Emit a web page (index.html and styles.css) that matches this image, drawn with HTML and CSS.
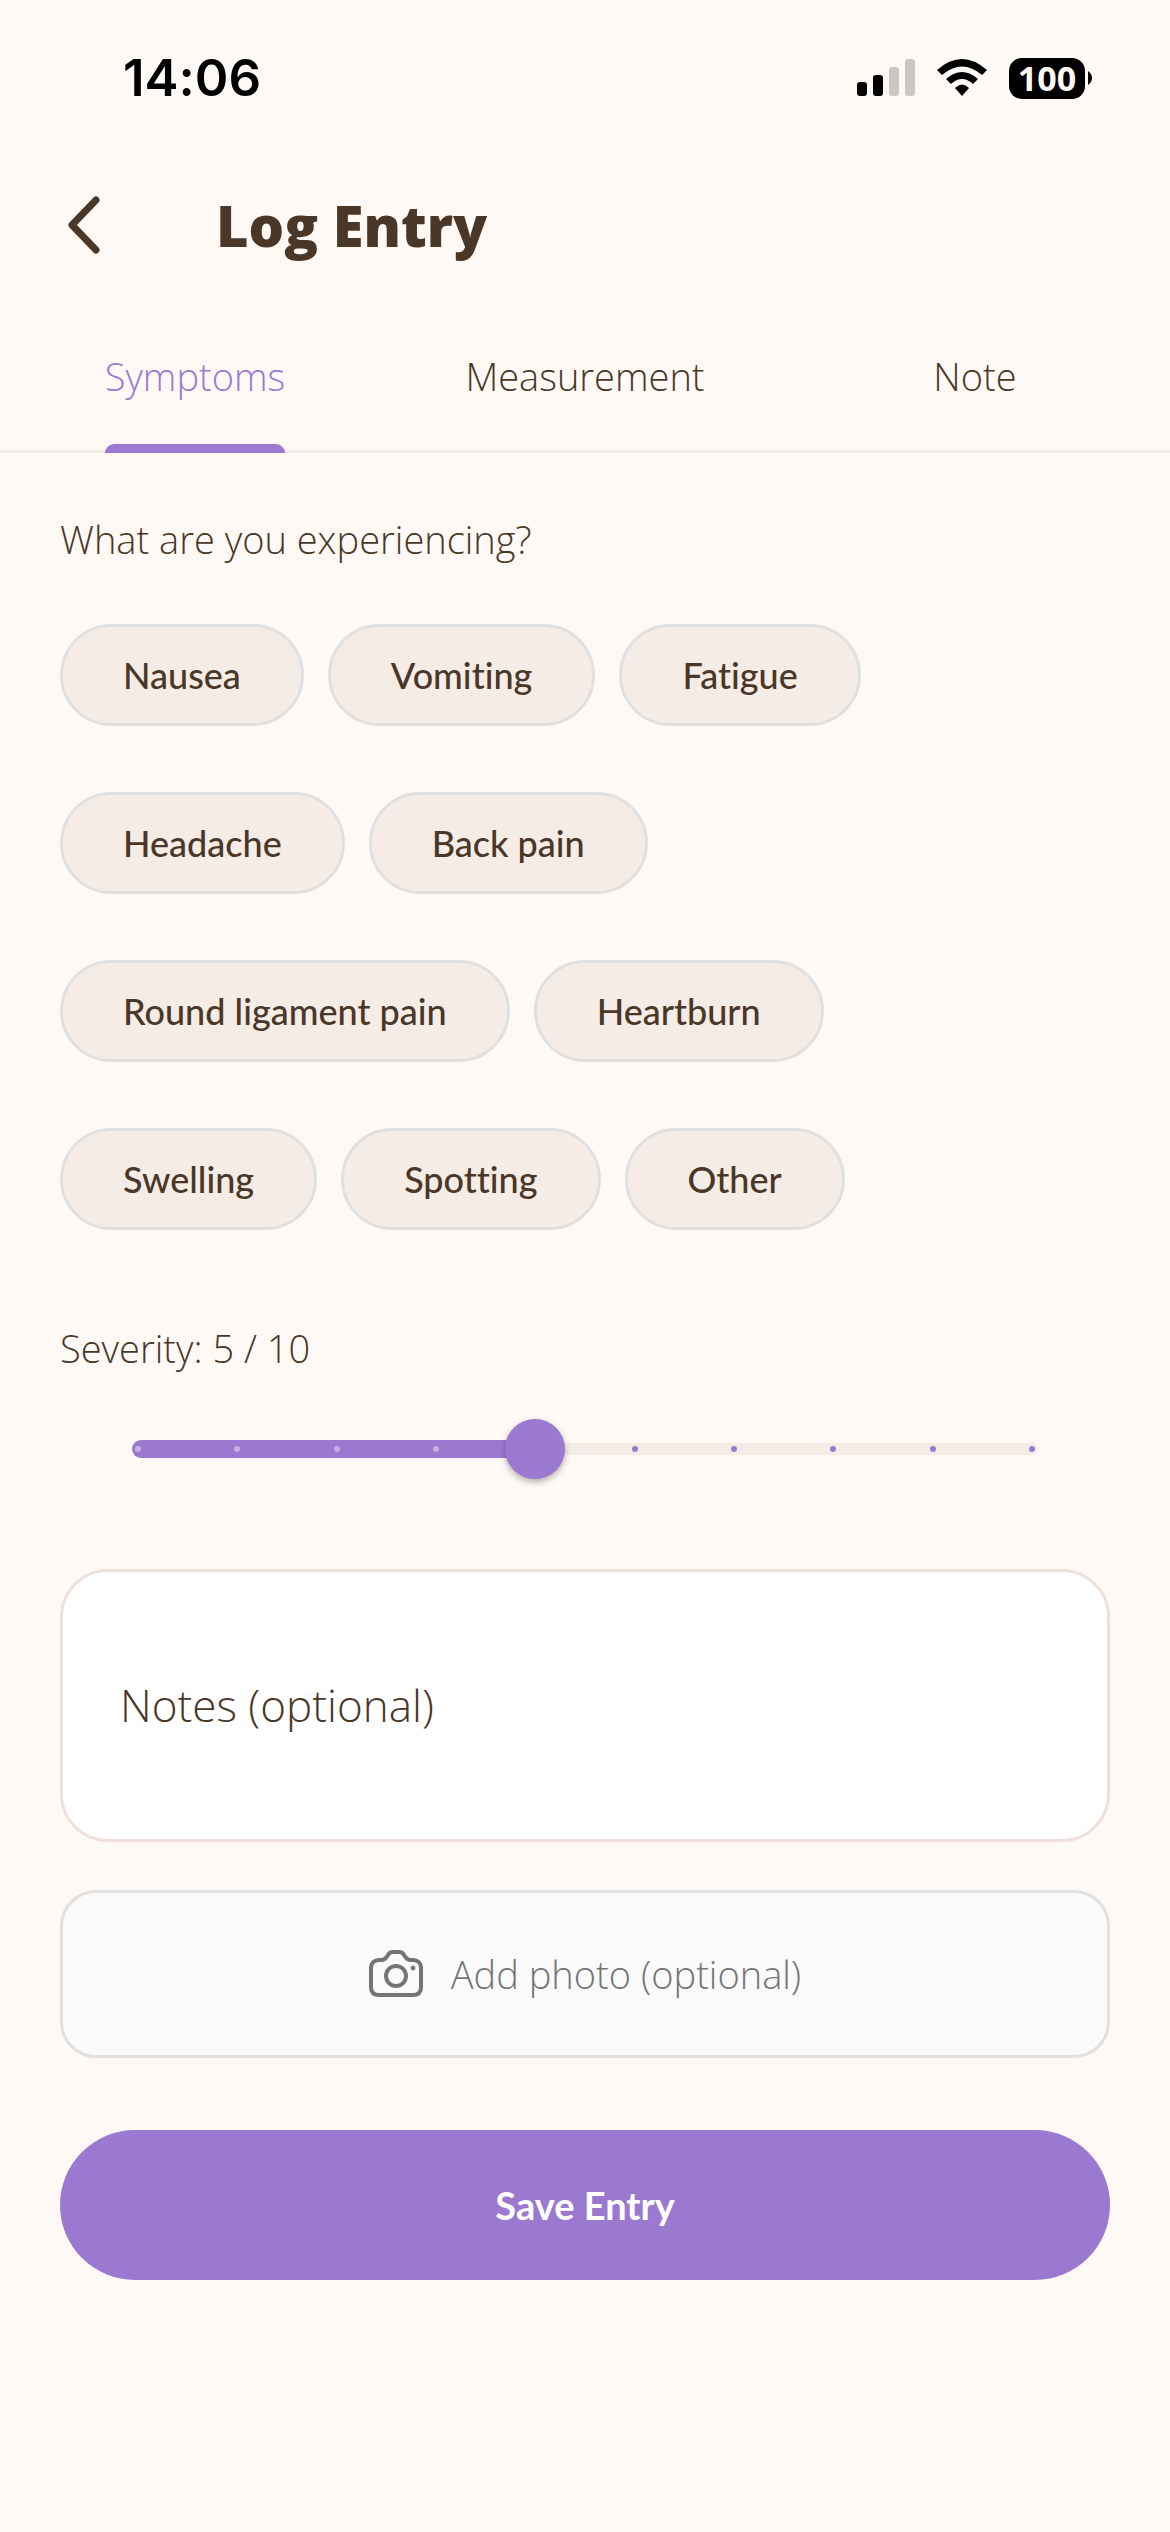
FILE: index.html
```
<!DOCTYPE html>
<html lang="en">
<head>
    <meta charset="UTF-8">
    <meta name="viewport" content="width=device-width, initial-scale=1.0">
    <title>Log Entry</title>
    <link rel="stylesheet" href="styles.css">
</head>
<body>

<div class="status-bar">
    <span class="time">14:06</span>
    <div class="status-icons">
        <svg width="58" height="38" viewBox="0 0 58 38" aria-hidden="true">
            <rect x="0" y="23" width="10" height="14" rx="3"/>
            <rect x="16" y="16" width="10" height="21" rx="3"/>
            <rect x="32" y="8" width="10" height="29" rx="3" fill="#ccc7c4"/>
            <rect x="48" y="0" width="10" height="37" rx="3" fill="#ccc7c4"/>
        </svg>
        <svg width="50" height="38" viewBox="0 0 50 38" aria-hidden="true">
            <path d="M0 11 Q25 -11 50 11 L45 16 Q25 -1 5 16 Z"/>
            <path d="M9 20 Q25 6 41 20 L36 25 Q25 15 14 25 Z"/>
            <path d="M18 29 Q25 22 32 29 L25 37 Z"/>
        </svg>
        <div class="battery">
            <span class="battery-level">100</span>
            <svg width="4" height="14" viewBox="0 0 4 14" aria-hidden="true"><path d="M0 0 Q4 3 4 7 Q4 11 0 14 Z"/></svg>
        </div>
    </div>
</div>

<header class="header">
    <button class="back" type="button" aria-label="Back">
        <svg width="32" height="58" viewBox="0 0 32 58" aria-hidden="true">
            <path d="M28 4 L4 29 L28 54" fill="none" stroke="#4a3728" stroke-width="7" stroke-linecap="round" stroke-linejoin="round"/>
        </svg>
    </button>
    <h1>Log Entry</h1>
</header>

<nav class="tabs">
    <a href="#symptoms" class="tab active" aria-current="page">Symptoms</a>
    <a href="#measurement" class="tab">Measurement</a>
    <a href="#note" class="tab">Note</a>
</nav>

<form class="container" id="symptoms">
    <h2 class="label">What are you experiencing?</h2>
    <div class="chips">
        <button class="chip" type="button">Nausea</button>
        <button class="chip" type="button">Vomiting</button>
        <button class="chip" type="button">Fatigue</button>
        <button class="chip" type="button">Headache</button>
        <button class="chip" type="button">Back pain</button>
        <button class="chip" type="button">Round ligament pain</button>
        <button class="chip" type="button">Heartburn</button>
        <button class="chip" type="button">Swelling</button>
        <button class="chip" type="button">Spotting</button>
        <button class="chip" type="button">Other</button>
    </div>

    <label class="label" for="severity">Severity: 5 / 10</label>
    <div class="slider">
        <div class="track"></div>
        <div class="fill-area"><div class="fill" style="width: 45%"></div></div>
        <div class="ticks">
            <i class="on"></i><i class="on"></i><i class="on"></i><i class="on"></i><i class="on"></i>
            <i></i><i></i><i></i><i></i><i></i>
        </div>
        <input type="range" id="severity" min="1" max="10" value="5">
    </div>

    <textarea class="notes" rows="1" placeholder="Notes (optional)" aria-label="Notes (optional)"></textarea>

    <button class="photo" type="button">
        <svg width="54" height="48" viewBox="0 0 54 48" fill="none" stroke="#757575" stroke-width="4" stroke-linejoin="round" aria-hidden="true">
            <path d="M10 10 H13 C16 10 17 8 19 5 C20 3 22 2 24 2 H30 C32 2 34 3 35 5 C37 8 38 10 41 10 H44 C49 10 52 13 52 18 V37 C52 43 49 45 44 45 H10 C5 45 2 43 2 37 V18 C2 13 5 10 10 10 Z"/>
            <circle cx="27" cy="26" r="10"/>
            <circle cx="44" cy="18" r="2" fill="#757575" stroke-width="1"/>
        </svg>
        <span>Add photo (optional)</span>
    </button>

    <button class="save" type="submit">Save Entry</button>
</form>

</body>
</html>
```
FILE: styles.css
```
* {
    box-sizing: border-box;
}
body {
    font-family: "Open Sans", sans-serif;
    font-weight: 300;
    font-variant-ligatures: none;
    margin: 0;
    background-color: #fff9f5;
    color: #4a3728;
}
button, textarea {
    font-family: inherit;
    font-weight: inherit;
    font-variant-ligatures: inherit;
    color: inherit;
}
.status-bar {
    display: flex;
    justify-content: space-between;
    align-items: center;
    padding: 48px 78px 0 123px;
    color: #000;
    font-family: Inter, sans-serif;
}
.time {
    font-size: 51px;
    line-height: 60px;
    font-weight: 600;
}
.status-icons {
    display: flex;
    align-items: center;
    gap: 22px;
}
.battery {
    display: flex;
    align-items: center;
    gap: 3px;
}
.battery-level {
    width: 76px;
    background-color: #000;
    color: #fff9f5;
    border-radius: 13px;
    font-family: "Open Sans", sans-serif;
    font-size: 34px;
    line-height: 41px;
    font-weight: 700;
    text-align: center;
}
.header {
    display: flex;
    align-items: center;
    gap: 108px;
    padding: 76px 60px 0;
}
.back {
    display: flex;
    padding: 12px 8px;
    border: none;
    background: none;
    cursor: pointer;
}
.header h1 {
    margin: 0;
    font-size: 56px;
    line-height: 82px;
    font-weight: 800;
}
.tabs {
    display: grid;
    grid-template-columns: repeat(3, 1fr);
    justify-items: center;
    margin-top: 36px;
    border-bottom: 3px solid #f5ece6;
}
.tab {
    display: flex;
    flex-direction: column;
    gap: 44px;
    padding-top: 50px;
    margin-bottom: -3px;
    color: #4a3728;
    font-size: 38px;
    line-height: 48px;
    text-decoration: none;
}
.tab::after {
    content: "";
    height: 9px;
    border-radius: 9px 9px 0 0;
}
.tab.active {
    color: #9b79d0;
}
.tab.active::after {
    background-color: #9b79d0;
}
.container {
    display: flex;
    flex-direction: column;
    padding: 0 60px 48px;
}
.label {
    margin: 62px 0 0;
    font-size: 38px;
    line-height: 48px;
    font-weight: inherit;
}
.chips {
    display: flex;
    flex-wrap: wrap;
    gap: 66px 24px;
    max-width: 880px;
    margin: 61px 0 32px;
}
.chip {
    padding: 24px 60px;
    border: 3px solid #e0e0e0;
    border-radius: 51px;
    background-color: #f5ece6;
    font-family: Lato, sans-serif;
    font-size: 36px;
    line-height: 48px;
    font-weight: 500;
    cursor: pointer;
}
/* track, fill, ticks and the input share one cell */
.slider {
    display: grid;
    align-items: center;
    margin: 47px 48px 90px;
}
.slider > * {
    grid-area: 1 / 1;
}
.track {
    height: 12px;
    margin: 0 24px;
    border-radius: 6px;
    background-color: #f5ece6;
}
.fill-area {
    margin: 0 24px;
}
.fill {
    height: 18px;
    border-radius: 9px;
    background-color: #9b79d0;
}
.ticks {
    display: flex;
    justify-content: space-between;
    padding: 0 27px;
}
.ticks i {
    width: 6px;
    height: 6px;
    border-radius: 50%;
    background-color: #9b79d0;
}
.ticks .on {
    background-color: #c4afe3;
}
.slider input {
    appearance: none;
    width: 100%;
    height: 60px;
    margin: 0;
    background: none;
}
.slider input::-webkit-slider-thumb {
    appearance: none;
    width: 60px;
    height: 60px;
    border-radius: 50%;
    background-color: #9b79d0;
    box-shadow: 0 3px 6px rgba(0,0,0,0.3);
}
.notes {
    padding: 108px 57px;
    border: 3px solid #efe0da;
    border-radius: 48px;
    background-color: #fff;
    font-size: 44px;
    line-height: 51px;
    resize: none;
    field-sizing: content;
}
.notes::placeholder {
    color: #4a3728;
    opacity: 1;
}
.photo {
    display: flex;
    align-items: center;
    justify-content: center;
    gap: 28px;
    margin-top: 48px;
    padding: 57px;
    border: 3px solid #e0e0e0;
    border-radius: 36px;
    background-color: #fafafa;
    color: #757575;
    font-size: 38px;
    line-height: 48px;
    cursor: pointer;
}
.save {
    margin-top: 72px;
    padding: 51px;
    border: none;
    border-radius: 75px;
    background-color: #9b79d0;
    color: #fff;
    font-family: Lato, sans-serif;
    font-size: 38px;
    line-height: 48px;
    font-weight: 700;
    cursor: pointer;
}
```
